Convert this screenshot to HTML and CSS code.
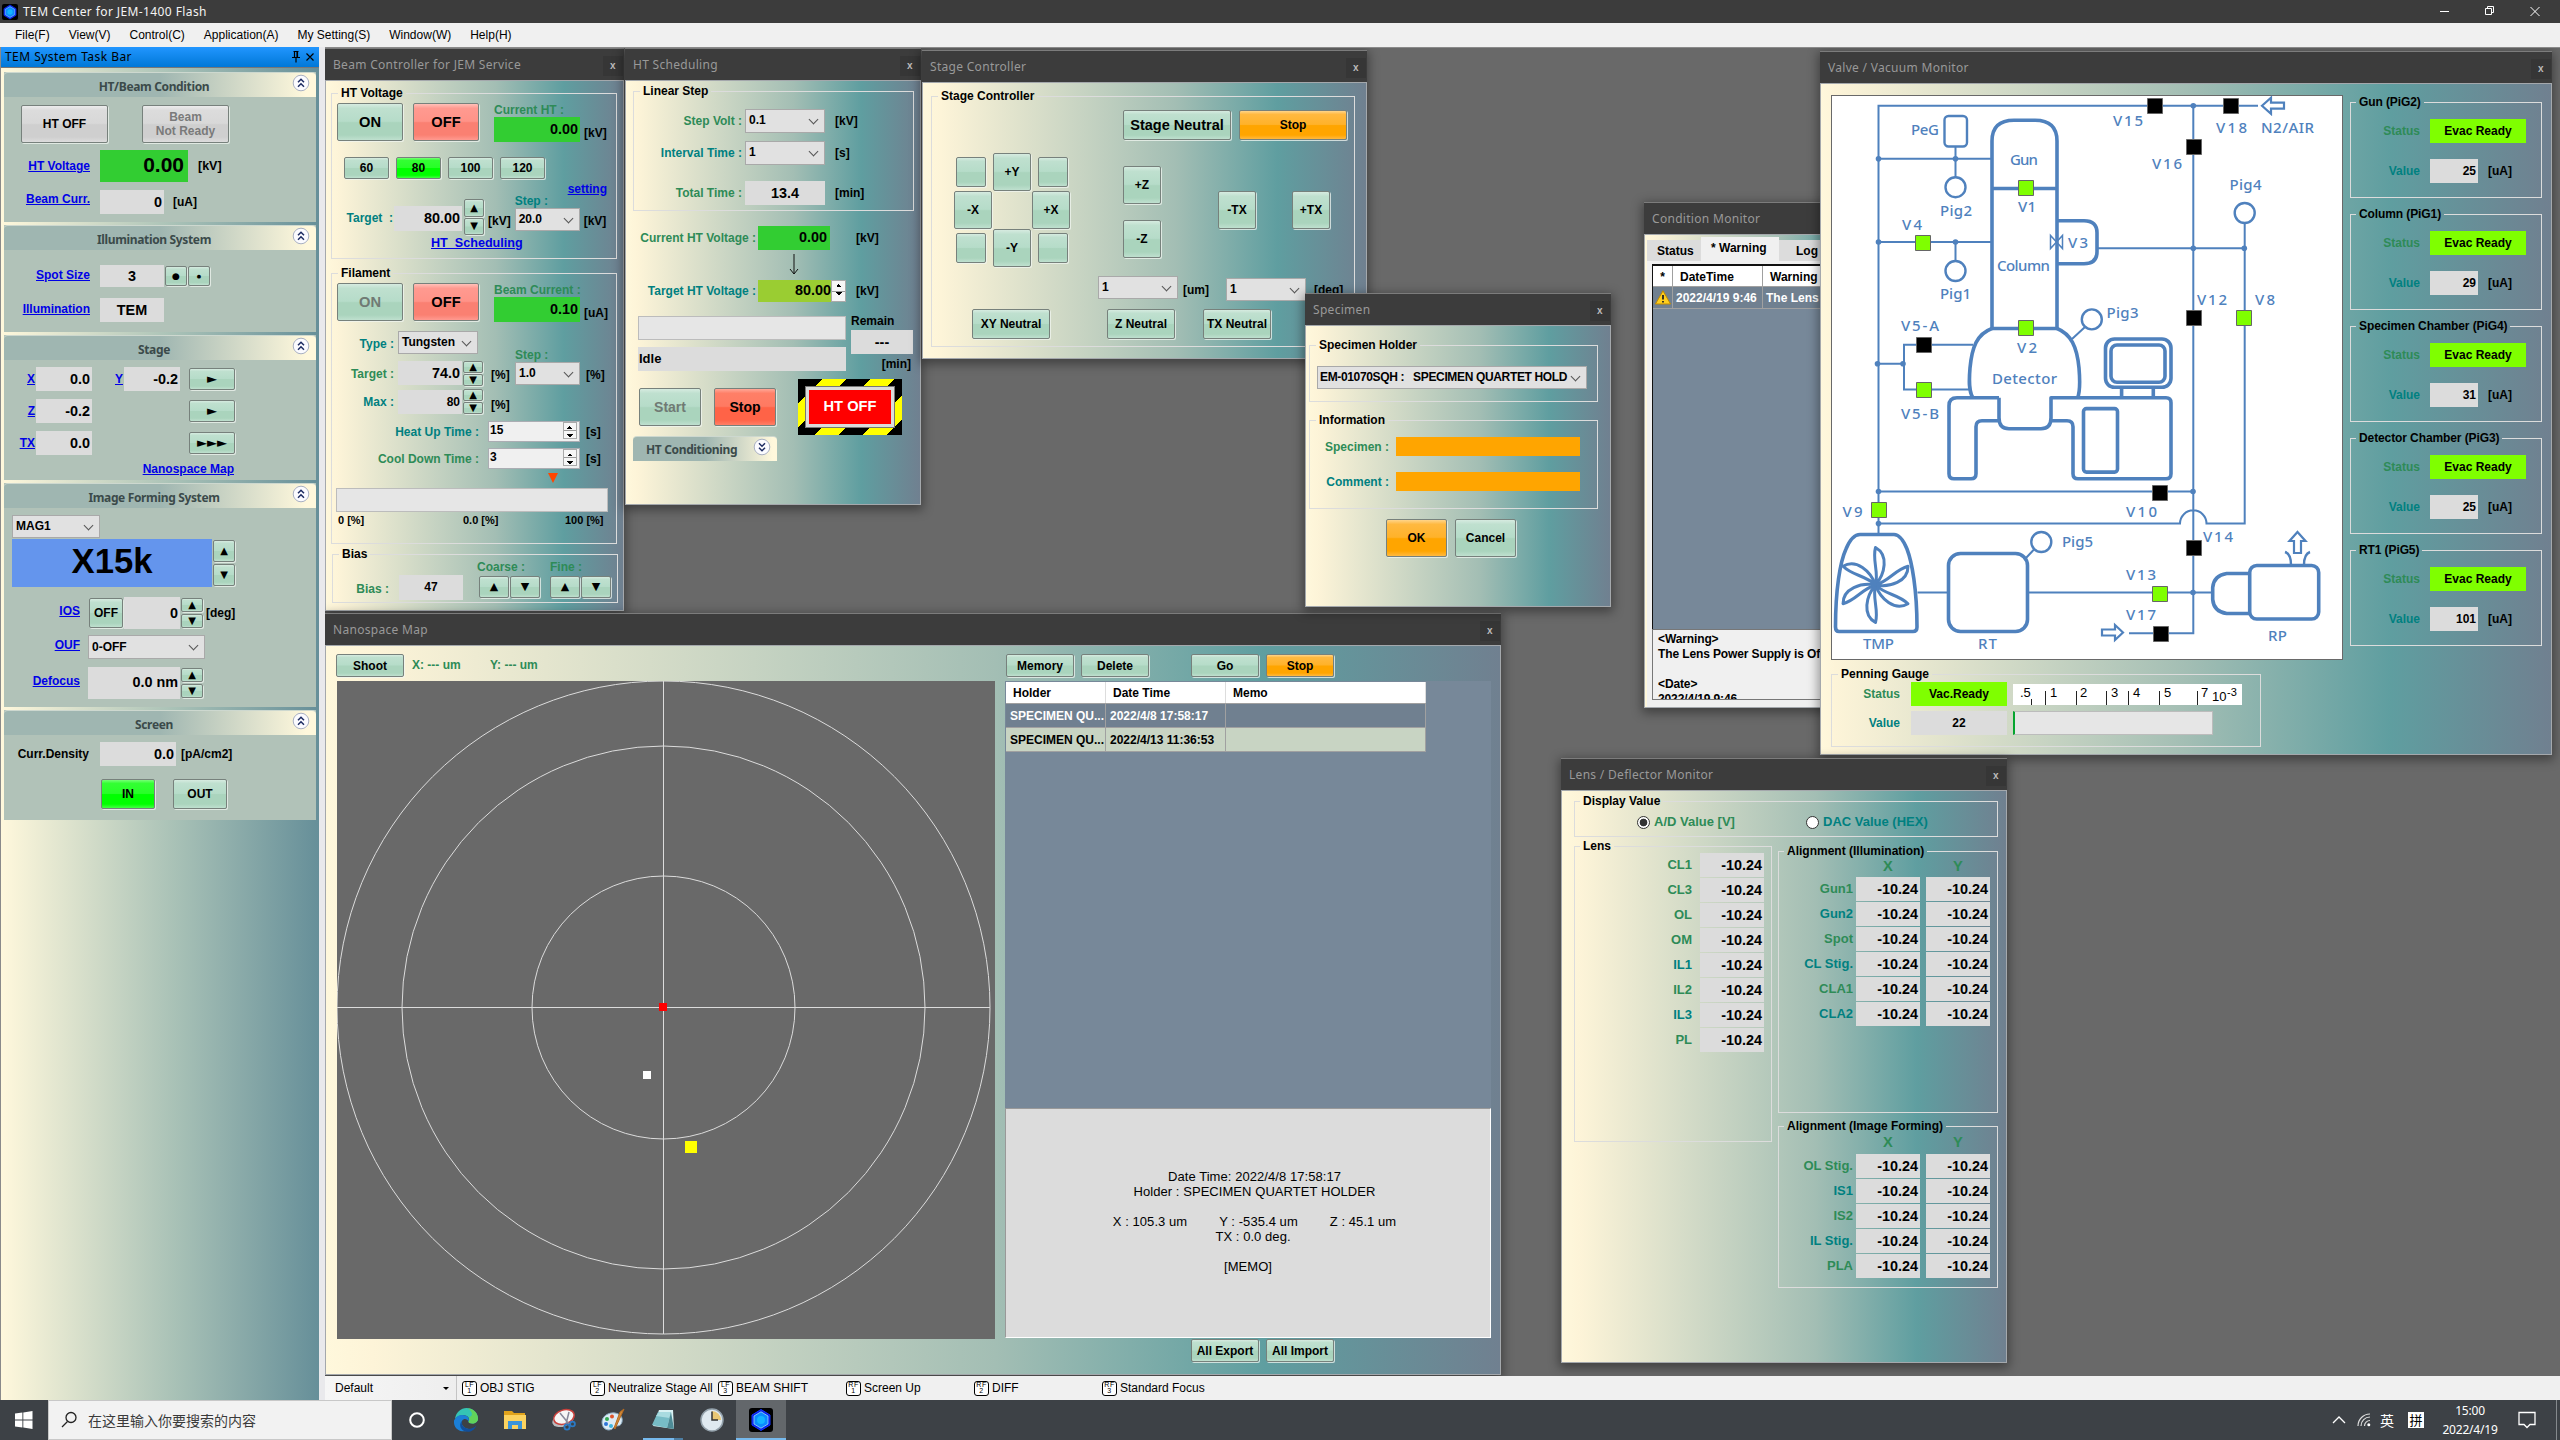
FILE: index.html
```html
<!DOCTYPE html>
<html lang="en">
<head>
<meta charset="utf-8">
<title>TEM Center for JEM-1400 Flash</title>
<link rel="stylesheet" href="styles.css">
</head>
<body>
<svg class="defs" width="0" height="0">
  <symbol id="hex" viewBox="0 0 24 24"><rect width="24" height="24" rx="3" fill="#000"/><path d="M12 1.5 21 7v10l-9 5.5L3 17V7z" fill="#0a22e8" stroke="#1437ff"/><path d="M12 3.8 19 8v8l-7 4.2L5 16V8z" fill="#0b8cff" stroke="#9fd6ff" stroke-width=".8"/><circle cx="12" cy="12" r="4" fill="#15b4ff"/></symbol>
  <symbol id="up2" viewBox="0 0 18 18"><circle cx="9" cy="9" r="7.8" fill="#fbfbff" stroke="#a9b0c2"/><path d="M6 8.2 9 5.2l3 3M6 12.8l3-3 3 3" fill="none" stroke="#1e2d63" stroke-width="1.5"/></symbol>
  <symbol id="down2" viewBox="0 0 18 18"><circle cx="9" cy="9" r="7.8" fill="#fbfbff" stroke="#a9b0c2"/><path d="M6 5.2l3 3 3-3M6 9.8l3 3 3-3" fill="none" stroke="#1e2d63" stroke-width="1.5"/></symbol>
</svg>

<header class="titlebar">
  <svg class="appicon" width="16" height="16"><use href="#hex"/></svg>
  <span class="apptitle">TEM Center for JEM-1400 Flash</span>
  <svg class="winctl" width="120" height="22" fill="none" stroke="#fff"><path d="M7 10.5h9M52.5 7.500h6v6h-6zM54.500 7.500v-2h6v6h-2M97.500 6l9 9M106.500 6l-9 9"/></svg>
</header>
<nav class="menubar"><span>File(F)</span><span>View(V)</span><span>Control(C)</span><span>Application(A)</span><span>My Setting(S)</span><span>Window(W)</span><span>Help(H)</span></nav>

<main class="workspace">
<aside class="dock">
  <div class="dock-title"><span>TEM System Task Bar</span>
    <svg width="26" height="14" fill="none" stroke="#000" stroke-width="1.200"><path d="M3.500 1.500h5M4.500 1.500v6M7.500 1.500v6M7 1.500v6M2 7.500h8M6 7.500v5M16.500 3.500l7 7M23.500 3.500l-7 7"/></svg></div>
  <div class="dock-body">
    <section class="card c1"><h2><span>HT/Beam Condition</span><svg><use href="#up2"/></svg></h2>
      <div class="row big-two"><button class="btn gray">HT OFF</button><button class="btn gray dis">Beam<br>Not Ready</button></div>
      <div class="row f-ht"><a>HT Voltage</a><b class="val green">0.00</b><span class="u">[kV]</span></div>
      <div class="row f-bc"><a>Beam Curr.</a><b class="val">0</b><span class="u">[uA]</span></div>
    </section>
    <section class="card c2"><h2><span>Illumination System</span><svg><use href="#up2"/></svg></h2>
      <div class="row f-spot"><a>Spot Size</a><b class="val mid">3</b><button class="btn sq">●</button><button class="btn sq tiny">●</button></div>
      <div class="row f-ill"><a>Illumination</a><b class="val mid">TEM</b></div>
    </section>
    <section class="card c3"><h2><span>Stage</span><svg><use href="#up2"/></svg></h2>
      <div class="row f-ax"><a>X</a><b class="val">0.0</b><a class="second">Y</a><b class="val">-0.2</b><button class="btn">►</button></div>
      <div class="row f-ax"><a>Z</a><b class="val">-0.2</b><button class="btn">►</button></div>
      <div class="row f-ax"><a>TX</a><b class="val">0.0</b><button class="btn">►►►</button></div>
      <div class="row f-map"><a>Nanospace Map</a></div>
    </section>
    <section class="card c4"><h2><span>Image Forming System</span><svg><use href="#up2"/></svg></h2>
      <div class="combo c-mag">MAG1</div>
      <div class="row f-mag"><b class="mag">X15k</b><div class="spin"><button class="btn">▲</button><button class="btn">▼</button></div></div>
      <div class="row f-ios"><a>IOS</a><button class="btn off">OFF</button><b class="val">0</b><div class="spin"><button class="btn">▲</button><button class="btn">▼</button></div><span class="u">[deg]</span></div>
      <div class="row f-ouf"><a>OUF</a><div class="combo">0-OFF</div></div>
      <div class="row f-def"><a>Defocus</a><b class="val">0.0 nm</b><div class="spin"><button class="btn">▲</button><button class="btn">▼</button></div></div>
    </section>
    <section class="card c5"><h2><span>Screen</span><svg><use href="#up2"/></svg></h2>
      <div class="row f-cd"><span class="cd">Curr.Density</span><b class="val">0.0</b><span class="u">[pA/cm2]</span></div>
      <div class="row f-io"><button class="btn lime">IN</button><button class="btn">OUT</button></div>
    </section>
  </div>
</aside>

<div class="right">
<div class="desktop">

<section class="win w-beam"><h1><span>Beam Controller for JEM Service</span><i>x</i></h1>
 <div class="body">
  <fieldset class="g-ht"><legend>HT Voltage</legend>
    <div class="row onoff"><button class="btn">ON</button><button class="btn salmon">OFF</button><div class="col"><span class="lb g">Current HT :</span><b class="val green">0.00</b></div><span class="u">[kV]</span></div>
    <div class="row presets"><button class="btn">60</button><button class="btn lime">80</button><button class="btn">100</button><button class="btn">120</button></div>
    <div class="row setting"><a>setting</a></div>
    <div class="row target"><span class="lb t">Target&nbsp; :</span><b class="val">80.00</b><div class="spin"><button class="btn">▲</button><button class="btn">▼</button></div><span class="u">[kV]</span><div class="col"><span class="lb t">Step :</span><div class="combo">20.0</div></div><span class="u">[kV]</span></div>
    <div class="row sched"><a>HT&nbsp; Scheduling</a></div>
  </fieldset>
  <fieldset class="g-fil"><legend>Filament</legend>
    <div class="row onoff"><button class="btn dis">ON</button><button class="btn salmon">OFF</button><div class="col"><span class="lb g">Beam Current :</span><b class="val green">0.10</b></div><span class="u">[uA]</span></div>
    <div class="row type"><span class="lb t">Type :</span><div class="combo">Tungsten</div></div>
    <div class="row ftarget"><span class="lb g">Target :</span><b class="val">74.0</b><div class="spin"><button class="btn">▲</button><button class="btn">▼</button></div><span class="u">[%]</span><div class="col"><span class="lb g">Step :</span><div class="combo">1.0</div></div><span class="u">[%]</span></div>
    <div class="row fmax"><span class="lb t">Max :</span><b class="val">80</b><div class="spin"><button class="btn">▲</button><button class="btn">▼</button></div><span class="u">[%]</span></div>
    <div class="row time"><span class="lb t">Heat Up Time :</span><div class="num">15<i></i></div><span class="u">[s]</span></div>
    <div class="row time cool"><span class="lb g">Cool Down Time :</span><div class="num">3<i></i></div><span class="u">[s]</span></div>
    <div class="marker"></div>
    <div class="bar"></div>
    <div class="row ticks"><span>0 [%]</span><span>0.0 [%]</span><span>100 [%]</span></div>
  </fieldset>
  <fieldset class="g-bias"><legend>Bias</legend>
    <div class="row"><span class="lb g">Bias :</span><b class="val mid">47</b>
      <div class="col"><span class="lb g">Coarse :</span><div class="pair"><button class="btn">▲</button><button class="btn">▼</button></div></div>
      <div class="col fine"><span class="lb g">Fine :</span><div class="pair"><button class="btn">▲</button><button class="btn">▼</button></div></div></div>
  </fieldset>
 </div>
</section>

<section class="win w-sched"><h1><span>HT Scheduling</span><i>x</i></h1>
 <div class="body">
  <fieldset class="g-lin"><legend>Linear Step</legend>
    <div class="row"><span class="lb g">Step Volt :</span><div class="combo">0.1</div><span class="u">[kV]</span></div>
    <div class="row"><span class="lb t">Interval Time :</span><div class="combo">1</div><span class="u">[s]</span></div>
    <div class="row total"><span class="lb g">Total Time :</span><b class="val mid">13.4</b><span class="u">[min]</span></div>
  </fieldset>
  <div class="row volt"><span class="lb g">Current HT Voltage :</span><b class="val green">0.00</b><span class="u">[kV]</span></div>
  <svg class="downarrow" width="12" height="22" fill="none" stroke="#111"><path d="M6 0v20M2 15l4 5 4-5"/></svg>
  <div class="row volt tgt"><span class="lb t">Target HT Voltage :</span><b class="val olive">80.00</b><i class="mini"></i><span class="u">[kV]</span></div>
  <div class="row status"><div class="col"><div class="bar"></div><b class="val idle">Idle</b></div><div class="col remain"><span>Remain</span><b class="val mid">---</b><span class="m">[min]</span></div></div>
  <div class="row run"><button class="btn dis">Start</button><button class="btn tomato">Stop</button><div class="hazard"><b>HT OFF</b></div></div>
  <h2 class="fold"><span>HT Conditioning</span><svg><use href="#down2"/></svg></h2>
 </div>
</section>

<section class="win w-stage"><h1><span>Stage Controller</span><i>x</i></h1>
 <div class="body">
  <fieldset class="g-stage"><legend>Stage Controller</legend>
    <div class="row top"><button class="btn l">Stage Neutral</button><button class="btn orange">Stop</button></div>
    <div class="row pads">
      <div class="pad"><button class="btn s"></button><button class="btn">+Y</button><button class="btn s e"></button><button class="btn">-X</button><span></span><button class="btn">+X</button><button class="btn s"></button><button class="btn">-Y</button><button class="btn s e"></button></div>
      <div class="zs"><button class="btn">+Z</button><button class="btn">-Z</button></div>
      <div class="txs"><button class="btn">-TX</button><button class="btn">+TX</button></div>
    </div>
    <div class="row steps"><div class="combo">1</div><span class="u">[um]</span><div class="combo k2">1</div><span class="u">[deg]</span></div>
    <div class="row neutrals"><button class="btn">XY Neutral</button><button class="btn">Z Neutral</button><button class="btn">TX Neutral</button></div>
  </fieldset>
 </div>
</section>

<section class="win w-nano"><h1><span>Nanospace Map</span><i>x</i></h1>
 <div class="body">
  <div class="left">
    <div class="row bar1"><button class="btn">Shoot</button><span class="lb g">X: --- um</span><span class="lb g">Y: --- um</span></div>
    <svg class="map" viewBox="337 681 658 658" width="658" height="658">
      <rect x="337" y="681" width="658" height="658" fill="#696969"/>
      <g fill="none" stroke="#dcdcdc"><circle cx="663.500" cy="1007.500" r="326.500"/><circle cx="663.500" cy="1007.500" r="261.500"/><circle cx="663.500" cy="1007.500" r="131.500"/><path d="M663.500 681v653M337 1007.500h653"/></g>
      <rect x="659" y="1003" width="8" height="8" fill="#f00"/><rect x="643" y="1071" width="8" height="8" fill="#fff"/><rect x="685" y="1141" width="12" height="12" fill="#ff0"/>
    </svg>
  </div>
  <div class="list">
    <div class="row bar2"><button class="btn">Memory</button><button class="btn">Delete</button><button class="btn go">Go</button><button class="btn orange">Stop</button></div>
    <div class="grid">
      <div class="tr th"><span>Holder</span><span>Date Time</span><span>Memo</span></div>
      <div class="tr sel"><span>SPECIMEN QU...</span><span>2022/4/8 17:58:17</span><span></span></div>
      <div class="tr"><span>SPECIMEN QU...</span><span>2022/4/13 11:36:53</span><span></span></div>
    </div>
    <div class="info"><p class="i1">Date Time: 2022/4/8 17:58:17</p><p>Holder : SPECIMEN QUARTET HOLDER</p><p class="xyz"><span>X : 105.3 um</span><span>Y : -535.4 um</span><span>Z : 45.1 um</span></p><p class="tx">TX : 0.0 deg.</p><p class="memo">[MEMO]</p></div>
    <div class="row bar3"><button class="btn">All Export</button><button class="btn">All Import</button></div>
  </div>
 </div>
</section>

<section class="win w-spec"><h1><span>Specimen</span><i>x</i></h1>
 <div class="body">
  <fieldset class="g-hold"><legend>Specimen Holder</legend><div class="combo">EM-01070SQH :&nbsp;&nbsp; SPECIMEN QUARTET HOLD</div></fieldset>
  <fieldset class="g-info"><legend>Information</legend>
    <div class="row"><span class="lb g">Specimen :</span><div class="fill"></div></div>
    <div class="row"><span class="lb t">Comment :</span><div class="fill"></div></div>
  </fieldset>
  <div class="row okc"><button class="btn orange">OK</button><button class="btn">Cancel</button></div>
 </div>
</section>

<section class="win w-cond"><h1><span>Condition Monitor</span></h1>
 <div class="body">
  <div class="tabs"><span>Status</span><span class="on">* Warning</span><span>Log</span></div>
  <div class="page">
    <div class="wlist">
      <div class="wr wh"><span>*</span><span>DateTime</span><span>Warning</span></div>
      <div class="wr"><span><svg width="16" height="15" viewBox="0 0 16 15"><path d="M8 .8 15.500 14H.5z" fill="#ffcf1f" stroke="#c08a00"/><path d="M8 5v4.500M8 11v1.600" stroke="#222" stroke-width="1.800"/></svg></span><span>2022/4/19 9:46</span><span>The Lens Power</span></div>
    </div>
    <div class="detail">&lt;Warning&gt;<br>The Lens Power Supply is Off.<br><br>&lt;Date&gt;<br>2022/4/19 9:46</div>
  </div>
 </div>
</section>

<section class="win w-valve"><h1><span>Valve / Vacuum Monitor</span><i>x</i></h1>
 <div class="body">
  <div class="vleft">
  <svg class="diagram" viewBox="1831 95 512 565" width="512" height="565">
    <rect x="1831.500" y="95.500" width="511" height="564" fill="#fff" stroke="#696969"/>
    <g fill="none" stroke="#4f81bd" stroke-width="2">
      <path d="M1878.500 534V105.700H2258M1878.500 158.700H1992M1955.500 146v32M1878.500 242H1992M1955.500 242v18M1878.500 363.800H1904M1973 344.800H1904V389.400H1969M2193.300 105.700V633.200H2129M2097 248.300h147.700M2244.700 223V523.600H2206.500a13 13 0 0 0-26.500 0H1878.500M1878.500 491.500H2193M1917.500 592.500h31M2027.500 592.500h185M2085 327l-13 12M2034 549.500l-9 9.500"/>
      <path d="M2050.500 235.500v13l12-13v13z" stroke-width="1.500"/>
      <path d="M2262 105.700l9-8v5h13v6h-13v5zM2123 632.500l-8-7.500v4.500h-13v6h13v4.500zM2297.500 532l8 9h-4.500v12h-7v-12h-4.500z" stroke-width="2.200"/>
      <path d="M2285 552q6 2 6 13M2310 552q-6 2-6 13" stroke-width="2.400"/>
    </g>
    <g fill="#fff" stroke="#4f81bd" stroke-width="2.400">
      <rect x="1944.500" y="116" width="22.500" height="30.500" rx="4"/>
      <circle cx="1955.500" cy="187.200" r="10"/><circle cx="1955.500" cy="271" r="10"/><circle cx="2091.800" cy="319.400" r="10"/><circle cx="2244.700" cy="213" r="10"/><circle cx="2041.300" cy="542" r="10"/>
    </g>
    <g fill="none" stroke="#4f81bd" stroke-width="3.600" stroke-linejoin="round">
      <path d="M1992 328.500V141Q1992 120.200 2014 120.200H2035Q2057 120.200 2057 141V328.500M1992 188.500h65M1992 328.500h65"/>
      <path d="M2057 220.700h27q13 0 13 12v19q0 12-13 12h-27"/>
      <path d="M1992 328.500C1977 334 1972 347 1970 368C1969 380 1968.500 391 1973 398M2057 328.500C2071 334 2077 347 2079 368C2080 380 2080.500 391 2077.500 398"/>
      <path d="M1999 397.700h-42q-8 0-8 8v68q0 5 5 5h17q5 0 5-5v-47q0-6 6-6h17M1999 397.700v20q0 11 10 11h32q10 0 10-11v-20h115q5 0 5 5v71q0 5-5 5h-88q-5 0-5-5v-47q0-6-6-6h-15"/>
      <rect x="2083.500" y="408.600" width="34" height="63.500" rx="3"/>
      <rect x="2105.500" y="339" width="65.500" height="48.300" rx="9"/><rect x="2111" y="345" width="54" height="37.300" rx="6"/>
      <path d="M2121.600 387v10M2153.300 387v10"/>
      <path d="M1839 631.500H1913Q1917 631.500 1917 627C1917 590 1912 562 1907 549Q1901 534.500 1894 534.500H1860Q1852 534.500 1846 549C1840 562 1835.500 590 1835.500 627Q1835.500 631.500 1839 631.500z"/>
      <rect x="1948.500" y="553.500" width="79" height="78" rx="12"/>
      <rect x="2249.700" y="565.500" width="69" height="53.500" rx="7"/>
      <path d="M2249.700 573.500h-23q-13 2-14 14v12q1 12 14 14h23"/>
      <g stroke-width="3">
        <path id="blade" d="M1875.500 585C1879 572 1872 560 1875.500 547.500C1889 555 1885 574 1875.500 585z"/>
        <use href="#blade" transform="rotate(60 1875.500 585)"/><use href="#blade" transform="rotate(120 1875.500 585)"/><use href="#blade" transform="rotate(180 1875.500 585)"/><use href="#blade" transform="rotate(240 1875.500 585)"/><use href="#blade" transform="rotate(300 1875.500 585)"/>
      </g>
    </g>
    <g fill="#4f81bd"><circle cx="1878.500" cy="158.700" r="2.800"/><circle cx="1955.500" cy="158.700" r="2.800"/><circle cx="1878.500" cy="242" r="2.800"/><circle cx="1955.500" cy="242" r="2.800"/><circle cx="1877.500" cy="363.800" r="2.800"/><circle cx="1903" cy="363.800" r="2.800"/><circle cx="2193.300" cy="105.700" r="2.800"/><circle cx="2193.300" cy="248.300" r="2.800"/><circle cx="2244.300" cy="248.300" r="2.800"/><circle cx="1878.500" cy="491.500" r="2.800"/><circle cx="2193" cy="491.500" r="2.800"/><circle cx="1878.500" cy="523.600" r="2.800"/><circle cx="2193" cy="592.500" r="2.800"/></g>
    <g fill="#7fff00" stroke="#666"><path d="M2018.500 180.500h15v15h-15zM2018.500 320.500h15v15h-15zM1915.500 235.500h15v15h-15zM1916.500 382.500h15v15h-15zM2236.500 310.500h15v15h-15zM1871.500 502.500h15v15h-15zM2152.500 586.500h15v15h-15z"/></g>
    <g fill="#000" stroke="#666"><path d="M2147.500 98.500h15v15h-15zM2223.500 98.500h15v15h-15zM2186.500 139.500h15v15h-15zM2186.500 310.500h15v15h-15zM1916.500 337.500h15v15h-15zM2152.500 485.500h15v15h-15zM2186.500 540.500h15v15h-15zM2153.500 626.500h15v15h-15z"/></g>
    <g class="dl">
      <text x="1911" y="134.500" textLength="28">PeG</text><text x="2010" y="164.500" textLength="28">Gun</text><text x="2018" y="212" textLength="18">V1</text><text x="1940" y="215.500" textLength="32">Pig2</text>
      <text x="1902" y="230" textLength="20">V4</text><text x="2068" y="247.500" textLength="20">V3</text><text x="1997" y="271" textLength="53">Column</text><text x="1940" y="298.500" textLength="31">Pig1</text>
      <text x="1901" y="330.500" textLength="38">V5-A</text><text x="2017" y="353" textLength="20">V2</text><text x="1992" y="384" textLength="65">Detector</text><text x="1901" y="418.500" textLength="38">V5-B</text>
      <text x="2106.500" y="317.500" textLength="32">Pig3</text><text x="2229.500" y="189.500" textLength="32">Pig4</text><text x="2113" y="126" textLength="30">V15</text><text x="2216" y="132.500" textLength="31">V18</text><text x="2261" y="132.500" textLength="53">N2/AIR</text><text x="2152" y="168.500" textLength="30">V16</text>
      <text x="2197" y="305" textLength="30">V12</text><text x="2255" y="305" textLength="20">V8</text><text x="1842.500" y="516.500" textLength="20">V9</text><text x="2126" y="516.500" textLength="31">V10</text><text x="2203" y="542" textLength="30">V14</text><text x="2062" y="546.500" textLength="31">Pig5</text>
      <text x="2126" y="580" textLength="30">V13</text><text x="2126" y="619.500" textLength="30">V17</text><text x="1863" y="649" textLength="31">TMP</text><text x="1978" y="649" textLength="19">RT</text><text x="2268" y="641" textLength="19">RP</text>
    </g>
  </svg>
  <fieldset class="g-pen"><legend>Penning Gauge</legend>
    <div class="row"><span class="lb g">Status</span><b class="val chart">Vac.Ready</b>
      <svg class="scale" width="229" height="21"><rect width="229" height="21" fill="#fff"/><path d="M18.500 15v6M32.500 7v14M63.500 7v14M93.500 7v14M115.500 7v14M146.500 7v14M184.500 7v14" stroke="#222"/><g font-size="13"><text x="7" y="13">.5</text><text x="37" y="13">1</text><text x="67" y="13">2</text><text x="98" y="13">3</text><text x="120" y="13">4</text><text x="151" y="13">5</text><text x="188" y="13">7</text><text x="199" y="17">10</text><text x="214" y="12" font-size="11">-3</text></g></svg></div>
    <div class="row"><span class="lb t">Value</span><b class="val mid">22</b><div class="bar"></div></div>
  </fieldset>
  </div>
  <div class="gauges">
    <fieldset><legend>Gun (PiG2)</legend><div class="row"><span class="lb g">Status</span><b class="val chart">Evac Ready</b></div><div class="row"><span class="lb t">Value</span><b class="val">25</b><span class="u">[uA]</span></div></fieldset>
    <fieldset><legend>Column (PiG1)</legend><div class="row"><span class="lb g">Status</span><b class="val chart">Evac Ready</b></div><div class="row"><span class="lb t">Value</span><b class="val">29</b><span class="u">[uA]</span></div></fieldset>
    <fieldset><legend>Specimen Chamber (PiG4)</legend><div class="row"><span class="lb g">Status</span><b class="val chart">Evac Ready</b></div><div class="row"><span class="lb t">Value</span><b class="val">31</b><span class="u">[uA]</span></div></fieldset>
    <fieldset><legend>Detector Chamber (PiG3)</legend><div class="row"><span class="lb g">Status</span><b class="val chart">Evac Ready</b></div><div class="row"><span class="lb t">Value</span><b class="val">25</b><span class="u">[uA]</span></div></fieldset>
    <fieldset><legend>RT1 (PiG5)</legend><div class="row"><span class="lb g">Status</span><b class="val chart">Evac Ready</b></div><div class="row"><span class="lb t">Value</span><b class="val">101</b><span class="u">[uA]</span></div></fieldset>
  </div>
 </div>
</section>

<section class="win w-lens"><h1><span>Lens / Deflector Monitor</span><i>x</i></h1>
 <div class="body">
  <fieldset class="g-disp"><legend>Display Value</legend><div class="row"><i class="radio on"></i><span class="lb g">A/D Value [V]</span><i class="radio"></i><span class="lb t">DAC Value (HEX)</span></div></fieldset>
  <div class="lcols">
    <fieldset class="g-lens"><legend>Lens</legend>
      <div class="row"><span class="lb g">CL1</span><b class="val">-10.24</b></div>
      <div class="row"><span class="lb g">CL3</span><b class="val">-10.24</b></div>
      <div class="row"><span class="lb g">OL</span><b class="val">-10.24</b></div>
      <div class="row"><span class="lb g">OM</span><b class="val">-10.24</b></div>
      <div class="row"><span class="lb t">IL1</span><b class="val">-10.24</b></div>
      <div class="row"><span class="lb g">IL2</span><b class="val">-10.24</b></div>
      <div class="row"><span class="lb t">IL3</span><b class="val">-10.24</b></div>
      <div class="row"><span class="lb g">PL</span><b class="val">-10.24</b></div>
    </fieldset>
    <div class="aligns">
      <fieldset class="g-al a1"><legend>Alignment (Illumination)</legend>
        <div class="row hd"><span>X</span><span>Y</span></div>
        <div class="row"><span class="lb g">Gun1</span><b class="val">-10.24</b><b class="val">-10.24</b></div>
        <div class="row"><span class="lb t">Gun2</span><b class="val">-10.24</b><b class="val">-10.24</b></div>
        <div class="row"><span class="lb g">Spot</span><b class="val">-10.24</b><b class="val">-10.24</b></div>
        <div class="row"><span class="lb t">CL Stig.</span><b class="val">-10.24</b><b class="val">-10.24</b></div>
        <div class="row"><span class="lb g">CLA1</span><b class="val">-10.24</b><b class="val">-10.24</b></div>
        <div class="row"><span class="lb t">CLA2</span><b class="val">-10.24</b><b class="val">-10.24</b></div>
      </fieldset>
      <fieldset class="g-al a2"><legend>Alignment (Image Forming)</legend>
        <div class="row hd"><span>X</span><span>Y</span></div>
        <div class="row"><span class="lb g">OL Stig.</span><b class="val">-10.24</b><b class="val">-10.24</b></div>
        <div class="row"><span class="lb t">IS1</span><b class="val">-10.24</b><b class="val">-10.24</b></div>
        <div class="row"><span class="lb g">IS2</span><b class="val">-10.24</b><b class="val">-10.24</b></div>
        <div class="row"><span class="lb t">IL Stig.</span><b class="val">-10.24</b><b class="val">-10.24</b></div>
        <div class="row"><span class="lb g">PLA</span><b class="val">-10.24</b><b class="val">-10.24</b></div>
      </fieldset>
    </div>
  </div>
 </div>
</section>
</div>

<div class="keybar">
  <div class="preset"><span>Default</span><i></i></div>
  <span class="key"><i><em>LF</em><em>1</em></i>OBJ STIG</span><span class="key"><i><em>LF</em><em>2</em></i>Neutralize Stage All</span><span class="key"><i><em>LF</em><em>3</em></i>BEAM SHIFT</span><span class="key"><i><em>RF</em><em>1</em></i>Screen Up</span><span class="key"><i><em>RF</em><em>2</em></i>DIFF</span><span class="key"><i><em>RF</em><em>3</em></i>Standard Focus</span>
</div>
</div>
</main>

<footer class="taskbar">
  <div class="start"><svg width="18" height="18" viewBox="0 0 18 18" fill="#fff"><path d="M0 2.600 7.400 1.500v7H0zM8.300 1.400 17.500 0v8.500H8.300zM0 9.400h7.400v7L0 15.400zM8.300 9.400h9.200V18l-9.200-1.400z"/></svg></div>
  <div class="search"><svg width="18" height="18" viewBox="0 0 18 18" fill="none" stroke="#222" stroke-width="1.300"><circle cx="11" cy="6.500" r="5"/><path d="M7.500 10.500 2 16"/></svg><span>在这里输入你要搜索的内容</span></div>
  <div class="apps">
    <span><svg width="24" height="24"><circle cx="12" cy="12" r="6.800" fill="none" stroke="#fff" stroke-width="2"/></svg></span>
    <span><svg width="24" height="24" viewBox="0 0 24 24"><path d="M1 11C2 4 7 0 12.500 0 19 0 24 5 24 10.500c0 3.500-3 5-5.500 5-3 0-4-1-4-2 1-1 1-5-3-6C7 6.500 3 8 1 11z" fill="#35c3b4"/><path d="M14 0.200C20 1 24 5.500 24 10.500c0 3.500-3 5-5.500 5-3 0-4-1-4-2 1-1 1.500-3 .5-4.500 5-1 3-6-1-8.800z" fill="#62d35a"/><path d="M1 11c2-3.500 6-5 10.500-3.500 3 1 4 3.500 3 6-1-3-5-3.500-6.500-.5-1.500 4 3 9 9 8C11 26-1 23 0 12.500z" fill="#1b7fd6"/><path d="M8 13c-1.500 5 4 8.500 9 7.500 2-.4 4-1.500 5.500-3-3 7-10 7.500-14 4.500-3-2.500-3-7-.5-9z" fill="#114f9c"/></svg></span>
    <span><svg width="24" height="24" viewBox="0 0 24 24"><path d="M1 3h8l2 2h11v4H1z" fill="#e0a21b"/><path d="M1 7h22v14H1z" fill="#fbd25f"/><path d="M5 21v-8h14v8h-4v-4H9v4z" fill="#3a94da"/></svg></span>
    <span><svg width="26" height="24" viewBox="0 0 26 24"><ellipse cx="12" cy="12" rx="11" ry="6.500" transform="rotate(-18 12 12)" fill="#b9bcc0"/><ellipse cx="13" cy="9" rx="10.500" ry="7" transform="rotate(-18 13 9)" fill="#f6f6f6" stroke="#c9403c" stroke-width="1.500"/><path d="M9 5l9 11M18 4l-3 12" stroke="#889" stroke-width="1.500"/><circle cx="16" cy="19" r="2.600" fill="none" stroke="#2b79c4" stroke-width="1.800"/><circle cx="21.500" cy="16" r="2.400" fill="none" stroke="#2b79c4" stroke-width="1.800"/></svg></span>
    <span><svg width="26" height="24" viewBox="0 0 26 24"><path d="M2 14C2 8 9 4 15 5s8 5 7 9-4 4-6 4-3 4-7 4-7-3-7-8z" fill="#dcebf5" stroke="#8aa9bf"/><circle cx="7" cy="11" r="2" fill="#33a852"/><circle cx="12" cy="8.500" r="2" fill="#e0562d"/><circle cx="6" cy="16" r="2" fill="#2f75d8"/><circle cx="11" cy="18" r="2" fill="#3bb5e0"/><path d="M24 1 15 21l-1-1 6-16z" fill="#d08a3a" stroke="#b56a20"/></svg></span>
    <span class="note"><svg width="24" height="24" viewBox="0 0 24 24"><path d="M8 2h14l1 19-21-3z" fill="#d9f1f3"/><path d="M7 4h13l-4 16-15-3z" fill="#77bcc6"/><path d="M8 4h12l-1.500 6L5 8z" fill="#a9dbe0"/><path d="M20 4l3 17-7-1z" fill="#4e8b96"/></svg></span>
    <span><svg width="24" height="24" viewBox="0 0 24 24"><circle cx="12" cy="12" r="11" fill="#dfe9f0" stroke="#93a1ab" stroke-width="1.500"/><path d="M12 12V3a9 9 0 0 1 9 9z" fill="#e9c774"/><path d="M12 3.500V12h6" fill="none" stroke="#333" stroke-width="1.500"/></svg></span>
    <span class="active"><svg width="24" height="24"><use href="#hex"/></svg></span>
  </div>
  <div class="tray">
    <svg class="chev" width="14" height="8" fill="none" stroke="#fff" stroke-width="1.300"><path d="M1 7l6-6 6 6"/></svg>
    <svg class="wifi" width="14" height="14" fill="none" stroke="#ddd" stroke-width="1.200"><path d="M1 13A12 12 0 0 1 13 1M4 13a9 9 0 0 1 9-9M7.500 13a5.500 5.500 0 0 1 5.500-5.500"/><circle cx="11.800" cy="11.800" r="1.500" fill="#fff" stroke="none"/></svg>
    <span class="ime">英</span><span class="py">拼</span>
    <span class="clock">15:00<br>2022/4/19</span>
    <svg class="notif" width="18" height="18" fill="none" stroke="#fff" stroke-width="1.300"><path d="M1 1.500h16v12h-5l-3 3-3-3H1z"/></svg>
    <i class="peek"></i>
  </div>
</footer>
</body>
</html>
```
FILE: styles.css
```css
*{box-sizing:border-box}
html,body{margin:0;height:100%}
body{width:2560px;height:1440px;overflow:hidden;display:flex;flex-direction:column;font:bold 12px/14px "Liberation Sans",Arial,sans-serif;color:#000;background:#696969}
.defs{position:absolute}
h1,h2,p{margin:0;font:inherit}
button{font:inherit;color:inherit;margin:0}
span,b,a,button{white-space:nowrap}
i,em{font-style:normal}

/* application frame */
.titlebar{height:23px;background:#3c3c3c;color:#f4f4f4;display:flex;align-items:center;padding-left:2px;font:12px/16px "Noto Sans",sans-serif}
.apptitle{margin-left:5px;letter-spacing:.4px;flex:1}
.winctl{margin-right:7px}
.menubar{height:24px;background:#f0f0f0;display:flex;gap:19px;padding:5px 0 0 15px;font-weight:normal}
.workspace{height:1353px;display:flex}
.right{flex:1;display:flex;flex-direction:column;border-left:6px solid #e9e9ec}
.desktop{position:relative;height:1329px;background:#696969;overflow:hidden;border-top:1px solid #8a8a8a}

/* primitives */
.row{display:flex;align-items:center}
.row>*{flex:none}
.col{display:flex;flex-direction:column}
.btn{display:flex;align-items:center;justify-content:center;padding:0;flex:none;text-align:center;border:1px solid #77817c;border-radius:2px;background:linear-gradient(#d6ebe0 0,#bfe0cf 12%,#b6dcc9 48%,#aad4bd 52%,#aad4bd 86%,#bfe0cf);box-shadow:1px 1px 0 rgba(240,245,240,.75)}
.gray{background:linear-gradient(#ececec 0,#dcdcdc 12%,#d8d8d8 48%,#cfcfcf 52%,#cfcfcf 86%,#dcdcdc)}
.lime{background:linear-gradient(#7f7 0,#3f3 12%,#28ff28 48%,#0f0 52%,#0f0 86%,#4f4)}
.salmon{background:linear-gradient(#ffc0b8 0,#ff9a90 12%,#ff9388 48%,#fa8072 52%,#fa8072 86%,#ff9a90)}
.tomato{background:linear-gradient(#ffa898 0,#ff7f67 12%,#ff7a62 48%,#ff6347 52%,#ff6347 86%,#ff7f67)}
.orange{background:linear-gradient(#ffd58a 0,#ffb940 12%,#ffb22a 48%,#ffa500 52%,#ffa500 86%,#ffb940)}
.dis{color:#707a74}
.gray.dis{color:#7a7a7a}
.val{display:block;flex:none;background:#dcdcdc;text-align:right;padding-right:2px;height:24px;line-height:24px;font-size:14.400px}
.mid{text-align:center;padding:0}
.green{background:#32cd32}
.olive{background:#9acd32}
.chart{background:#7fff00;text-align:center;padding:0}
.combo{flex:none;position:relative;height:23px;line-height:21px;border:1px solid #a9a9a9;background:#e1e1e1;padding-left:3px;white-space:nowrap}
.combo::after{content:"";position:absolute;right:7px;top:6px;width:6px;height:6px;border:solid #555;border-width:0 1px 1px 0;transform:rotate(45deg)}
.lb{display:block}
.g{color:#2e8b57}
.t{color:#008080}
a{color:#0000e6;text-decoration:underline}
.bar{background:#e6e6e6;border:1px solid #bcbcbc;height:24px}
.spin{display:flex;flex-direction:column;gap:2px}
.spin .btn{font-size:10px;line-height:8px;font-family:"DejaVu Sans",sans-serif}
fieldset{margin:0;padding:0;min-width:0;border:1px solid #dcdcdc}
legend{margin-left:6px;padding:0 3px;height:14px}

/* docked task bar */
.dock{width:319px;display:flex;flex-direction:column;border-left:1px solid #8a8a8a}
.dock-title{height:21px;background:linear-gradient(#2196ff,#0078d7);display:flex;justify-content:space-between;align-items:center;padding:0 2px 0 4px;font:12px/18px "Noto Sans",sans-serif;letter-spacing:.45px;border-bottom:1px solid #777}
.dock-title svg{margin-right:1px}
.dock-body{flex:1;padding:4px 3px 0;display:flex;flex-direction:column;gap:3px;background:linear-gradient(90deg,#fff8dc,#a8c1b6 55%,#668f99)}
.card{background:#b1c2b8;display:flex;flex-direction:column}
.card h2,.fold{height:25px;display:flex;align-items:center;position:relative;border-radius:4px 4px 0 0;background:linear-gradient(90deg,#9fb6b1 50%,#fff8dc 97%);border-top:1px solid #cdd8cf;font:bold 12px/18px "Noto Sans",sans-serif;color:#3b4a4a}
.card h2 span{width:300px;text-align:center;letter-spacing:-.35px;padding-top:3px}
.card h2 svg,.fold svg{position:absolute;right:6px;top:1px;width:18px;height:18px}
.c1{height:150px}.c2{height:107px}.c3{height:145px}.c4{height:224px}.c5{height:110px}
.card a{width:86px;text-align:right;flex:none}
.card .val{margin-left:10px}
.big-two{margin:8px 0 0 17px;gap:34px}
.big-two .btn{width:87px;height:38px}
.f-ht{margin-top:7px;height:32px}
.f-ht .val{width:88px;height:32px;line-height:30px;font-size:21px;padding-right:4px}
.f-ht .u{margin-left:10px;font-size:12.5px}
.f-bc{margin-top:8px;height:24px}
.f-bc a{margin-top:-6px}
.f-bc .val{width:64px}
.f-bc .u{margin-left:9px}
.f-spot{margin-top:15px;height:22px}
.f-spot a{margin-top:-3px}
.f-spot .val{width:64px;height:22px;line-height:22px}
.sq{width:22px;height:20px;margin-left:1px;font:9px/12px "DejaVu Sans",sans-serif}
.tiny{font-size:5px}
.f-ill{margin-top:11px;height:24px}
.f-ill a{margin-top:-3px}
.f-ill .val{width:64px}
.f-ax{margin-top:8px;height:24px}
.f-ax:nth-child(2){margin-top:7px}
.f-ax a{width:31px}
.f-ax .val{width:56px;margin-left:1px}
.f-ax .btn{width:46px;height:22px;margin-left:97px;font:13px/12px "DejaVu Sans",sans-serif}
.f-ax .second+.val+.btn{margin-left:9px}
.f-map{margin-top:7px}
.f-map a{width:230px}
.c-mag{width:88px;margin:7px 0 0 8px}
.f-mag{margin:1px 0 0 8px;height:48px}
.mag{width:200px;height:48px;background:#6495ed;text-align:center;font-size:34.67px;line-height:44px}
.f-mag .spin{margin-left:1px}
.f-mag .btn{width:22px;height:22px}
.f-ios{height:32px;margin-top:10px}
.f-ios a,.f-ouf a,.f-def a{width:76px;margin-top:-5px}
.off{width:34px;height:30px;margin-left:9px;font-size:12px}
.f-ios .val{width:56px;height:32px;line-height:32px;margin-left:1px}
.f-ios .spin,.f-def .spin{margin-left:1px}
.f-ios .spin .btn,.f-def .spin .btn{width:22px;height:14px}
.f-ios .u{margin-left:3px}
.f-ouf{margin-top:6px;height:24px}
.f-ouf .combo{width:117px;margin-left:8px;height:24px;line-height:22px}
.f-def{margin-top:8px;height:32px}
.f-def .val{width:92px;height:32px;line-height:30px;margin-left:8px}
.f-cd{margin-top:7px;height:24px}
.cd{width:85px;text-align:right;margin-right:1px}
.f-cd .val{width:76px}
.f-cd .u{margin-left:5px}
.f-io{margin:13px 0 0 97px;gap:18px}
.f-io .btn{width:54px;height:30px}

/* floating windows */
.win{position:absolute;display:flex;flex-direction:column;box-shadow:0 3px 10px 2px rgba(0,0,0,.38)}
.win h1{height:32px;flex:none;background:#3c3c3c;border-top:1px solid #7c7c7c;color:#999;display:flex;justify-content:space-between;align-items:center;padding:0 1px 0 8px;font:12px/16px "Noto Sans",sans-serif;letter-spacing:.3px}
.win h1 i{width:20px;height:20px;margin-top:3px;background:#363636;color:#bbb;font:bold 10px/19px "Liberation Sans",sans-serif;text-align:center}
.body{flex:1;border:1px solid #a4a8ac;background:linear-gradient(90deg,#fff8dc,#fdf4d8 4%,#a3beb4 57%,#5f9ea0 80%,#708090)}
.w-beam{left:0;top:0;width:299px;height:563px}
.w-sched{left:300px;top:0;width:296px;height:457px}
.w-stage{left:597px;top:2px;width:445px;height:309px}
.w-nano{left:0;top:565px;width:1176px;height:762px}
.w-spec{left:980px;top:245px;width:306px;height:314px}
.w-cond{left:1319px;top:154px;width:240px;height:506px}
.w-valve{left:1495px;top:3px;width:732px;height:704px}
.w-lens{left:1236px;top:710px;width:446px;height:605px}

/* beam controller */
.w-beam .body{padding:5px 6px 0 5px}
.g-ht{height:173px;width:286px}
.onoff{margin:3px 0 0 5px;height:39px;align-items:flex-start}
.onoff .btn{width:66px;height:38px;margin-right:10px;font-size:14.67px}
.onoff .col{margin-left:5px;width:86px}
.onoff .val{height:25px;line-height:24px}
.onoff .u{align-self:flex-end;margin:0 0 2px 4px}
.presets{margin:15px 0 0 12px;gap:7px}
.presets .btn{width:45px;height:22px}
.setting{margin-top:3px;height:14px;justify-content:flex-end;padding-right:9px}
.target{height:40px;align-items:flex-start}
.target>.lb{width:61px;text-align:right;margin-top:15px}
.target .val{width:68px;height:25px;margin:10px 0 0 1px}
.target .spin{margin:3px 0 0 2px;gap:1px}
.target .spin .btn{width:20px;height:17.500px}
.target .u{margin:18px 0 0 4px}
.target .col{margin-left:4px;margin-top:-2px}
.target .combo{width:65px}
.sched{margin-left:99px;height:14px;font-size:12.600px}
.g-fil{margin-top:7px;height:278px;width:286px}
.type{margin-top:9px}
.type .lb,.ftarget>.lb,.fmax .lb{width:62px;text-align:right;margin-right:4px}
.type .lb{margin-top:3px}
.type .combo{width:80px}
.ftarget{height:32px;align-items:flex-start}
.ftarget>.lb{margin-top:13px}
.ftarget .val,.fmax .val{width:64px}
.ftarget .val{margin-top:7px}
.g-fil .spin{gap:1px;margin-left:1px}
.g-fil .spin .btn{width:20px;height:12px}
.ftarget .spin{margin-top:7px}
.ftarget .u{margin:14px 0 0 8px;width:19px}
.ftarget .col{margin:-6px -2px 0 5px}
.ftarget .combo{width:65px;margin-top:0}
.fmax{margin-top:3px;height:25px}
.fmax .val{font-size:12px}
.fmax .u{margin:6px 0 0 8px}
.time{margin-top:7px;height:21px}
.cool{margin-top:6px}
.time .lb{width:147px;text-align:right}
.time .u{margin-left:6px}
.num{width:92px;height:21px;margin-left:9px;background:#f0f0f0;border:1px solid #abadb3;line-height:17px;padding-left:1px;display:flex;justify-content:space-between}
.num i,.mini{width:14px;height:17px;margin:0 2px 0 0;display:block;background:linear-gradient(#999,#999) 50% 50%/14px 1px no-repeat,conic-gradient(from 135deg at 50% 0,#000 90deg,transparent 0) 50% 3px/6px 3px no-repeat,conic-gradient(from -45deg at 50% 100%,#000 90deg,transparent 0) 50% 11px/6px 3px no-repeat,#f6f6f6;border:1px solid #aaa}
.marker{width:10px;height:10px;margin:4px 0 0 216px;background:#ff4500;clip-path:polygon(0 0,100% 0,50% 100%)}
.g-fil .bar{margin:5px 0 0 4px;width:272px}
.ticks{margin-top:1px;font-size:11px;padding-left:6px}
.ticks span{width:125px}
.ticks span+span{width:102px}
.ticks span+span+span{width:40px}
.g-bias{margin:3px 0 0 1px;height:56px;width:286px}
.g-bias .row{align-items:flex-start}
.g-bias .row>.lb{width:56px;text-align:right;margin-top:21px}
.g-bias .val{width:64px;height:25px;margin:14px 14px 0 10px;font-size:12px}
.g-bias .col{width:73px;margin-top:-1px}
.pair{display:flex;gap:1px;margin:2px 0 0 2px}
.fine .pair{margin-left:0}
.pair .btn{width:30px;height:22px;font:11px/10px "DejaVu Sans",sans-serif}

/* HT scheduling */
.w-sched .body{padding:3px 0 0 7px}
.g-lin{width:281px;height:127px}
.g-lin .row{height:24px;margin-top:8px}
.g-lin legend+.row{margin-top:11px}
.g-lin .total.row{margin-top:16px}
.g-lin .lb{width:108px;text-align:right;margin-right:3px}
.g-lin .combo,.g-lin .val{width:80px;height:24px}
.g-lin .u{margin-left:10px}
.volt{margin-top:15px;height:24px}
.volt .lb{width:123px;text-align:right;margin-right:2px}
.volt .val{width:72px;padding-right:3px;line-height:22px}
.volt .u{margin-left:26px}
.downarrow{display:block;margin:4px 0 0 155px}
.tgt{margin-top:3px}
.tgt .val{width:73px;height:22px;padding:0;line-height:20px}
.tgt .mini{width:15px;height:22px;margin:0}
.tgt .u{margin-left:10px}
.status{margin:13px 0 0 5px;height:56px;align-items:flex-start;gap:5px}
.status>.col{width:208px}
.idle{text-align:left;margin-top:7px;padding-left:1px;font-size:13px}
.status .remain{width:62px;margin-top:-2px}
.remain .val{margin-top:2px}
.remain .m{text-align:right;padding-right:2px;margin-top:3px}
.run{margin:7px 0 0 6px;height:56px}
.run .btn{width:62px;height:38px;margin-right:13px;font-size:14px}
.hazard{width:104px;height:56px;padding:8px;background:repeating-linear-gradient(135deg,#000 0 17px,#ff0 17px 34px)}
.hazard b{display:block;height:40px;border:3px solid #dcdcdc;outline:1px solid #777;background:#f00;color:#fff;text-align:center;font-size:14.67px;line-height:32px}
.run .hazard{margin-left:9px}
.fold{width:144px;margin-top:1px}
.fold span{margin-left:13px;padding-top:2px;letter-spacing:-.35px}

/* stage controller */
.w-stage .body{padding:6px 0 0 8px}
.g-stage{width:424px;height:258px}
.g-stage .top{margin:7px 0 0 191px;gap:8px}
.top .btn{width:108px;height:30px}
.top .l{font-size:14.500px}
.pads{margin:13px 0 0 22px;height:114px;align-items:flex-start}
.pads .btn{width:38px;height:38px}
.pads .s{width:30px;height:30px;margin:0 0 0 2px}
.pads .e{margin-left:6px}
.pad{display:grid;grid-template:repeat(3,38px)/repeat(3,38px);column-gap:1px;align-items:center}
.zs{margin:13px 0 0 53px;display:flex;flex-direction:column;gap:16px}
.txs{margin:38px 0 0 57px;display:flex;gap:36px}
.steps{margin-top:9px;align-items:flex-start;height:25px}
.steps .combo{width:80px;margin-left:166px}
.steps .u{margin:7px 0 0 5px;width:30px}
.steps .k2{margin:2px 0 0 13px}
.steps .k2+.u{margin-left:8px}
.neutrals{margin:8px 0 0 40px}
.neutrals .btn{width:78px;height:30px}
.neutrals .btn+.btn{width:68px;margin-left:57px}
.neutrals .btn+.btn+.btn{margin-left:28px}

/* specimen */
.w-spec .body{padding:12px 0 0 3px}
.g-hold{width:289px;height:64px}
.g-hold .combo{width:270px;margin:14px 0 0 7px;padding-left:2px;letter-spacing:-.35px}
.g-info{width:289px;height:96px;margin-top:11px}
.g-info .row{margin-top:16px;height:19px}
.g-info legend+.row{margin-top:10px}
.g-info .lb{width:79px;text-align:right;margin-right:7px}
.fill{width:184px;height:19px;background:#ffa500}
.okc{margin:10px 0 0 77px;gap:8px}
.okc .btn{width:61px;height:38px}

/* condition monitor */
.w-cond .body{padding:2px 0 0 2px;display:flex;flex-direction:column}
.tabs{display:flex;height:24px;align-items:flex-end}
.tabs span{height:21px;background:#dcdcdc;padding:4px 0 0 10px;width:54px;flex:none}
.tabs .on{height:24px;width:78px;background:#f0f0f0}
.tabs span:last-child{width:105px;padding-left:17px}
.page{flex:1;background:#f0f0f0;padding:3px 0 0 5px}
.wlist{height:365px;background:#778899;border:2px solid #111;border-width:2px 0 0 1px}
.wr{display:flex;height:22px;line-height:22px;color:#fff;background:#708090;border-bottom:1px solid #a0a0a0}
.wh{background:#fff;color:#000;height:21px}
.wr span{border-right:1px solid #a0a0a0;width:20px;text-align:center;flex:none}
.wr span+span{width:90px;text-align:left;padding-left:3px}
.wh span+span{padding-left:7px}
.wr svg{display:block;margin:3px 2px}
.detail{height:71px;border:1px solid #777;border-right:0;padding:2px 0 0 5px;line-height:15px;overflow:hidden;white-space:nowrap;letter-spacing:-.12px}

/* valve monitor */
.w-valve .body{display:flex;padding:11px 0 0 10px;background:linear-gradient(90deg,#fff8dc,#fdf4d8 2%,#a3beb4 50%,#5f9ea0 78%,#708090)}
.diagram{display:block}
.dl{fill:#4f81bd;font:500 15px "Noto Sans",sans-serif}
.vleft{width:519px}
.g-pen{width:430px;height:80px;margin-top:7px}
.g-pen .row{margin-top:1px;height:24px}
.g-pen .row+.row{margin-top:5px}
.g-pen .lb{width:68px;text-align:right;margin-right:11px}
.g-pen .val{width:96px;font-size:12px;margin-right:6px}
.g-pen .bar{width:200px;border-left:2px solid #06a52f}
.scale{font-family:"Liberation Sans",sans-serif;font-weight:normal}
.gauges{display:flex;flex-direction:column;gap:9px}
.gauges fieldset{width:192px;height:103px}
.gauges legend{margin-left:5px;letter-spacing:-.1px}
.gauges .row{margin-top:10px;height:24px}
.gauges .row+.row{margin-top:16px}
.gauges .lb{width:69px;text-align:right;margin-right:10px}
.gauges .val{width:48px;font-size:12px}
.gauges .chart{width:96px}
.gauges .u{margin-left:10px}

/* lens monitor */
.w-lens .body{padding:3px 0 0 12px}
.g-disp{width:424px;height:43px}
.g-disp legend,.g-lens legend{margin-left:5px}
.g-disp .row{margin-left:62px;height:28px;font-size:13px}
.radio{width:13px;height:13px;border:1px solid #333;border-radius:50%;background:#fff;margin-right:4px}
.radio.on{background:radial-gradient(#333 0 3.500px,#fff 4.200px)}
.g-disp .lb{width:152px}
.lcols{display:flex;gap:6px;margin-top:2px}
.g-lens{width:198px;height:303px}
.g-lens .row{height:24px;margin-bottom:1px}
.g-lens .lb{width:117px;text-align:right;margin-right:8px;font-size:13px}
.w-lens .val{width:64px}
.aligns{padding-top:5px}
.g-al{width:220px}
.g-al legend{margin-left:5px}
.a1{height:269px}
.a2{height:169px;margin-top:6px}
.hd{color:#2e8b57;font-size:14.67px}
.g-al .hd{height:19px;margin-left:77px;padding-bottom:4px}
.a2 .hd.row{height:21px}
.hd span{width:64px;text-align:center;margin-right:6px}
.g-al .row+.row{height:24px;margin-bottom:1px}
.g-al .lb{width:74px;text-align:right;margin-right:3px;font-size:13px}
.g-al .val+.val{margin-left:6px}

/* nanospace map */
.w-nano .body{display:flex;padding:8px 0 0 11px}
.left{width:668px}
.bar1,.bar2{height:23px}
.bar1 .btn{width:68px;height:23px;margin:0 8px 0 -1px}
.bar1 .lb{width:78px;margin-top:-2px}
.map{display:block;margin-top:4px}
.list{width:486px;display:flex;flex-direction:column}
.list .btn{width:68px;height:23px}
.bar2{padding-left:1px;gap:7px}
.bar2 .go{margin-left:35px}
.grid{height:427px;margin-top:4px;background:#778899;padding:1px 0 0 1px}
.tr{display:flex;width:420px;height:24px;line-height:24px;background:#c8d4c3;border-bottom:1px solid #a0a0a0}
.tr.th{background:#fff;height:22px;line-height:22px}
.tr.sel{background:#708090;color:#fff}
.tr span{border-right:1px solid #a0a0a0;padding-left:4px;width:100px}
.tr span+span{width:120px}
.tr span+span+span{width:200px}
.tr.th span{padding-left:7px;border-color:#ddd}
.info{height:230px;background:#dcdcdc;border:1px solid #999;border-color:#999 #fff #fff #999;font:13px/15px "Liberation Sans",sans-serif;letter-spacing:.06px;display:flex;flex-direction:column;align-items:center;padding-top:60px}
.info p{margin-left:13px}
.info .xyz{margin-top:15px;display:flex;gap:32px}
.info .tx{margin-left:10px}
.info .memo{margin:15px 0 0}
.bar3{margin:1px 0 0 186px;gap:7px}

/* function-key bar */
.keybar{height:24px;display:flex;background:#f0f0f0;font-weight:normal;line-height:24px}
.preset{width:132px;display:flex;align-items:center;justify-content:space-between;padding:0 7px 0 10px;background:linear-gradient(90deg,#f6f6f6,#eee);border-right:1px solid #c4c4c4;margin-right:5px}
.preset i{border:3px solid transparent;border-top-color:#000;border-bottom:0}
.key{width:128px;display:flex;align-items:center}
.key i{width:15px;height:15px;border:1px solid #000;border-radius:3px;background:#fff;margin-right:3px;display:flex;flex-direction:column;align-items:center;font:7px/6.500px "Liberation Sans",sans-serif}
.key em{letter-spacing:.5px}

/* windows task bar */
.taskbar{height:40px;background:#3d4146;display:flex;font-weight:normal}
.start{width:48px;display:flex;align-items:center;justify-content:center}
.search{width:344px;background:#f2f2f2;border:1px solid #c8c8c8;display:flex;align-items:center;padding-left:11px;gap:10px;font:14px/20px "Noto Sans CJK SC",sans-serif;color:#3a3a3a}
.apps{display:flex;flex:1}
.apps span{width:49.200px;display:flex;align-items:center;justify-content:center}
.note{background:linear-gradient(90deg,#76b9ed 78%,#4d7ea3 0) 50% 100%/40px 2px no-repeat}
.apps .active{background:#63676b;border-bottom:2px solid #76b9ed;padding-top:2px}
.tray{display:flex;align-items:center;color:#fff}
.wifi{margin-left:11px}
.ime{margin-left:9px;font:14px/20px "Noto Sans CJK SC",sans-serif}
.py{margin-left:14px;width:16px;height:16px;background:#fff;color:#000;font:13px/15px "Noto Sans CJK SC",sans-serif;text-align:center}
.clock{width:76px;margin:0 0 0 8px;text-align:center;font:12px/19px "Noto Sans",sans-serif;letter-spacing:-.2px}
.notif{margin-left:10px}
.peek{width:1px;height:40px;background:#85898c;margin:0 3px 0 20px}
```
